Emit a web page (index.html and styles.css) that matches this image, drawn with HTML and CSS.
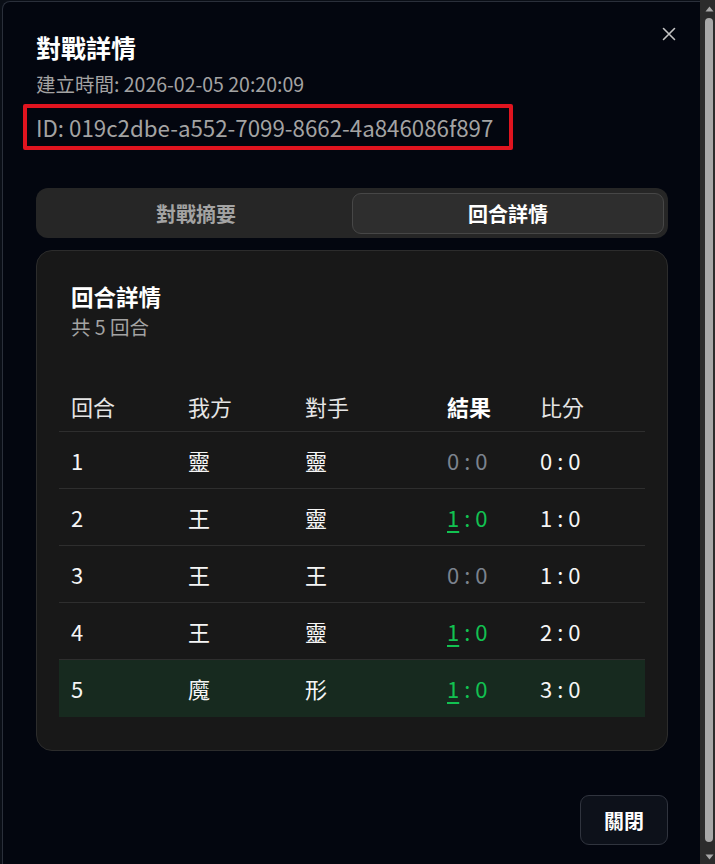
FILE: index.html
```html
<!DOCTYPE html>
<html lang="zh-Hant">
<head>
<meta charset="utf-8">
<title>對戰詳情</title>
<link rel="stylesheet" href="styles.css">
</head>
<body>
<div class="dialog">
  <button class="close" aria-label="關閉">
    <svg width="14" height="14" viewBox="0 0 14 14"><path d="M1.5 1.5 L12.5 12.5 M12.5 1.5 L1.5 12.5" stroke="#c4c4c4" stroke-width="1.6" stroke-linecap="round" fill="none"/></svg>
  </button>
  <header class="head">
    <h2 class="title">對戰詳情</h2>
    <p class="created">建立時間: 2026-02-05 20:20:09</p>
    <div class="id-line"><span class="id-box">ID: 019c2dbe-a552-7099-8662-4a846086f897</span></div>
  </header>
  <div class="tabs">
    <button class="tab">對戰摘要</button>
    <button class="tab active">回合詳情</button>
  </div>
  <section class="card">
    <div class="card-head">
      <h3 class="card-title">回合詳情</h3>
      <p class="card-sub">共 5 回合</p>
    </div>
    <table class="rounds">
      <colgroup>
        <col class="c1"><col class="c2"><col class="c3"><col class="c4"><col class="c5">
      </colgroup>
      <thead>
        <tr><th>回合</th><th>我方</th><th>對手</th><th class="strong">結果</th><th>比分</th></tr>
      </thead>
      <tbody>
        <tr><td>1</td><td>靈</td><td>靈</td><td><span class="score draw"><span>0</span><span>:</span><span>0</span></span></td><td><span class="score"><span>0</span><span>:</span><span>0</span></span></td></tr>
        <tr><td>2</td><td>王</td><td>靈</td><td><span class="score win"><span class="u">1</span><span>:</span><span>0</span></span></td><td><span class="score"><span>1</span><span>:</span><span>0</span></span></td></tr>
        <tr><td>3</td><td>王</td><td>王</td><td><span class="score draw"><span>0</span><span>:</span><span>0</span></span></td><td><span class="score"><span>1</span><span>:</span><span>0</span></span></td></tr>
        <tr><td>4</td><td>王</td><td>靈</td><td><span class="score win"><span class="u">1</span><span>:</span><span>0</span></span></td><td><span class="score"><span>2</span><span>:</span><span>0</span></span></td></tr>
        <tr class="last"><td>5</td><td>魔</td><td>形</td><td><span class="score win"><span class="u">1</span><span>:</span><span>0</span></span></td><td><span class="score"><span>3</span><span>:</span><span>0</span></span></td></tr>
      </tbody>
    </table>
  </section>
  <footer class="foot">
    <button class="btn">關閉</button>
  </footer>
</div>
<div class="scrollbar" aria-hidden="true">
  <svg class="arrow" width="9" height="6" viewBox="0 0 9 6"><path d="M4.5 0.5 L8.5 5.5 L0.5 5.5 Z" fill="#a8a8a8"/></svg>
  <div class="thumb"></div>
  <svg class="arrow" width="9" height="6" viewBox="0 0 9 6"><path d="M0.5 0.5 L8.5 0.5 L4.5 5.5 Z" fill="#a8a8a8"/></svg>
</div>
</body>
</html>
```

FILE: styles.css
```css
html {
  color-scheme: dark;
  background: #0a0e16;
}
body {
  margin: 0;
  display: flex;
  align-items: flex-start;
  font-family: "Noto Sans CJK TC", "Noto Sans", sans-serif;
  color: #f5f5f5;
}
.dialog {
  position: relative;
  flex: 1;
  margin: 1px 0 0 2px;
  background: #03060f;
  border: 1px solid #2a2f3a;
  border-right: none;
  border-bottom: none;
  border-radius: 8px 0 0 0;
  padding: 29px 32px 36px 33px;
}
.scrollbar {
  width: 15px;
  height: 864px;
  flex: none;
  background: #2c2c2c;
  display: flex;
  flex-direction: column;
  align-items: center;
  padding: 6px 0 4px;
  box-sizing: border-box;
}
.arrow {
  display: block;
  flex: none;
  margin-left: 3px;
}
.thumb {
  flex: 1;
  width: 8px;
  margin: 6px 0 12px 3px;
  background: #a8a8a8;
  border-radius: 4px;
}
.close {
  position: absolute;
  top: 25px;
  right: 24px;
  padding: 0;
  border: none;
  background: none;
  width: 14px;
  height: 14px;
  display: flex;
}
.title {
  margin: 0;
  font-size: 25px;
  line-height: 32px;
  font-weight: 700;
  color: #ffffff;
}
.created {
  margin: 8px 0 0;
  font-size: 19.5px;
  line-height: 26px;
  color: #a3a3a3;
}
.id-line {
  margin-top: 7px;
  display: flex;
}
.id-box {
  margin-left: -13px;
  padding: 5px 16px 5px 9px;
  border: 4px solid #e0141f;
  border-radius: 2px;
  font-size: 22.3px;
  line-height: 28px;
  color: #a3a3a3;
}
.tabs {
  margin-top: 38px;
  display: grid;
  grid-template-columns: 1fr 1fr;
  padding: 5px 4px 4px;
  background: #262626;
  border-radius: 12px;
}
.tab {
  height: 41px;
  border: 1px solid transparent;
  border-radius: 9px;
  background: transparent;
  font-family: inherit;
  font-size: 20px;
  font-weight: 700;
  color: #a3a3a3;
  padding: 0;
}
.tab.active {
  background: #2e2e2e;
  border-color: #474747;
  color: #ffffff;
}
.card {
  margin-top: 12px;
  background: #181818;
  border: 1px solid #2c2c2c;
  border-radius: 16px;
  padding: 30px 22px 33px;
}
.card-head {
  padding-left: 12px;
}
.card-title {
  margin: 0;
  font-size: 22.5px;
  line-height: 30px;
  font-weight: 700;
  color: #ffffff;
}
.card-sub {
  margin: 3px 0 0;
  font-size: 19.5px;
  line-height: 26px;
  color: #a3a3a3;
}
.rounds {
  margin-top: 41px;
  width: 100%;
  border-collapse: collapse;
  table-layout: fixed;
  font-size: 22px;
  line-height: 28px;
}
.c1 { width: 117px; }
.c2 { width: 117px; }
.c3 { width: 142px; }
.c4 { width: 93px; }
.c5 { width: 117px; }
.rounds th {
  text-align: left;
  font-weight: 400;
  color: #e5e5e5;
  padding: 11px 12px;
  border-bottom: 1px solid #2e2e2e;
}
.rounds th.strong {
  font-weight: 700;
  color: #ffffff;
}
.rounds td {
  padding: 14px 12px;
  border-bottom: 1px solid #2e2e2e;
  color: #f5f5f5;
}
.rounds tr.last td {
  background: #172a1f;
  border-bottom-color: #172a1f;
}
.score {
  display: inline-flex;
  gap: 5px;
}
.score.draw {
  color: #7b838e;
}
.score.win {
  color: #12c251;
}
.u {
  text-decoration: underline;
  text-decoration-thickness: 2px;
  text-underline-offset: 4px;
}
.foot {
  margin-top: 44px;
  display: flex;
  justify-content: flex-end;
}
.btn {
  height: 50px;
  padding: 0 23px;
  background: #0d111a;
  border: 1px solid #30343e;
  border-radius: 9px;
  font-family: inherit;
  font-size: 20px;
  font-weight: 700;
  color: #ffffff;
}
```
